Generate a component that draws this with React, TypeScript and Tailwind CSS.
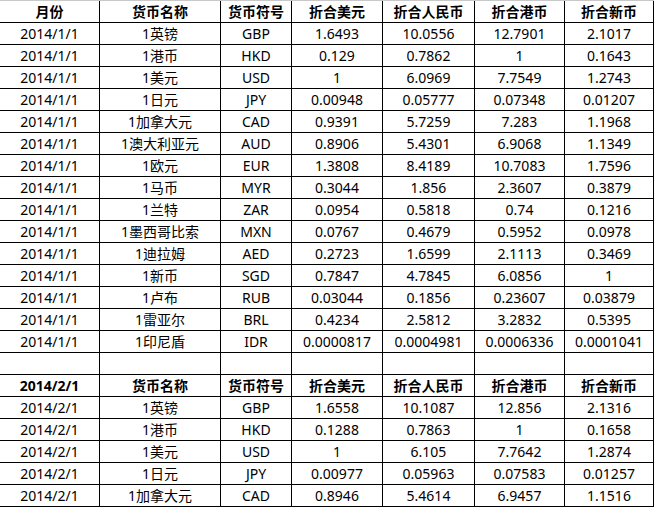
import { Fragment } from 'react';

const COLS = ['月份', '货币名称', '货币符号', '折合美元', '折合人民币', '折合港币', '折合新币'];

type Row = [string, string, string, string, string, string];

const JAN: Row[] = [
  ['1英镑', 'GBP', '1.6493', '10.0556', '12.7901', '2.1017'],
  ['1港币', 'HKD', '0.129', '0.7862', '1', '0.1643'],
  ['1美元', 'USD', '1', '6.0969', '7.7549', '1.2743'],
  ['1日元', 'JPY', '0.00948', '0.05777', '0.07348', '0.01207'],
  ['1加拿大元', 'CAD', '0.9391', '5.7259', '7.283', '1.1968'],
  ['1澳大利亚元', 'AUD', '0.8906', '5.4301', '6.9068', '1.1349'],
  ['1欧元', 'EUR', '1.3808', '8.4189', '10.7083', '1.7596'],
  ['1马币', 'MYR', '0.3044', '1.856', '2.3607', '0.3879'],
  ['1兰特', 'ZAR', '0.0954', '0.5818', '0.74', '0.1216'],
  ['1墨西哥比索', 'MXN', '0.0767', '0.4679', '0.5952', '0.0978'],
  ['1迪拉姆', 'AED', '0.2723', '1.6599', '2.1113', '0.3469'],
  ['1新币', 'SGD', '0.7847', '4.7845', '6.0856', '1'],
  ['1卢布', 'RUB', '0.03044', '0.1856', '0.23607', '0.03879'],
  ['1雷亚尔', 'BRL', '0.4234', '2.5812', '3.2832', '0.5395'],
  ['1印尼盾', 'IDR', '0.0000817', '0.0004981', '0.0006336', '0.0001041'],
];

const FEB: Row[] = [
  ['1英镑', 'GBP', '1.6558', '10.1087', '12.856', '2.1316'],
  ['1港币', 'HKD', '0.1288', '0.7863', '1', '0.1658'],
  ['1美元', 'USD', '1', '6.105', '7.7642', '1.2874'],
  ['1日元', 'JPY', '0.00977', '0.05963', '0.07583', '0.01257'],
  ['1加拿大元', 'CAD', '0.8946', '5.4614', '6.9457', '1.1516'],
];

function Cell({ children, bold }: { children?: React.ReactNode; bold?: boolean }) {
  return (
    <div
      className={`flex h-[22px] items-center justify-center border-r border-b border-black pt-px text-[14px] leading-none text-black ${
        bold ? 'font-bold' : ''
      }`}
    >
      {children}
    </div>
  );
}

export default function App() {
  return (
    <div
      className="min-h-[507px] w-[657px] bg-white"
      style={{ fontFamily: '"Noto Sans", "Noto Sans CJK SC", sans-serif' }}
    >
      <div className="grid w-[654px] grid-cols-[100px_121px_71px_91px_92px_90px_89px] border-t border-[#c8c8c8]">
        {COLS.map((c) => (
          <Cell key={c} bold>
            {c}
          </Cell>
        ))}
        {JAN.map((r) => (
          <Fragment key={'jan-' + r[1]}>
            <Cell>2014/1/1</Cell>
            {r.map((v, i) => (
              <Cell key={i}>{v}</Cell>
            ))}
          </Fragment>
        ))}
        {COLS.map((c) => (
          <Cell key={'empty-' + c} />
        ))}
        {['2014/2/1', ...COLS.slice(1)].map((c) => (
          <Cell key={'h2-' + c} bold>
            {c}
          </Cell>
        ))}
        {FEB.map((r) => (
          <Fragment key={'feb-' + r[1]}>
            <Cell>2014/2/1</Cell>
            {r.map((v, i) => (
              <Cell key={i}>{v}</Cell>
            ))}
          </Fragment>
        ))}
      </div>
    </div>
  );
}
